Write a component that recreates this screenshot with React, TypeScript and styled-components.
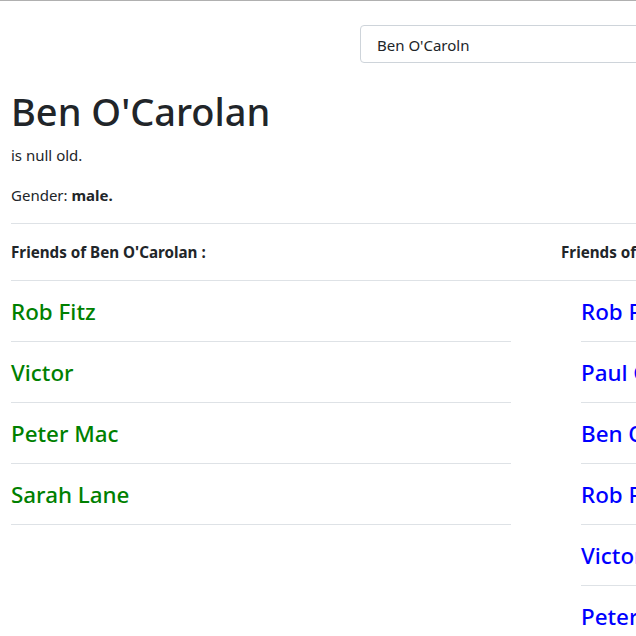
import React from "react";
import styled, { createGlobalStyle } from "styled-components";

const Global = createGlobalStyle`
  html, body { margin: 0; padding: 0; overflow: hidden; background: #fff; }
  body {
    font-family: "Noto Sans", "Open Sans", sans-serif;
    color: #212529;
    font-size: 16px;
    line-height: 1.5;
    border-top: 1px solid #b0b0b0;
  }
`;

const Page = styled.div`
  width: 1100px;
  padding-left: 11px;
`;

const SearchRow = styled.div`
  padding: 24px 0 0 349px;
`;

const SearchInput = styled.input`
  box-sizing: border-box;
  width: 500px;
  height: 38px;
  padding: 1px 16px 0;
  border: 1px solid #ced4da;
  border-radius: 4px;
  font-family: inherit;
  font-size: 15px;
  color: #212529;
  outline: none;
`;

const Title = styled.h1`
  margin: 24px 0 8px;
  font-size: 38px;
  font-weight: 500;
  line-height: 48px;
`;

const Para = styled.p`
  margin: 0 0 16px;
  font-size: 15px;
  line-height: 24px;
`;

const Rule = styled.hr`
  margin: 0;
  border: 0;
  border-top: 1px solid #dee2e6;
`;

const Columns = styled.div`
  display: grid;
  grid-template-columns: 500px 1fr;
  column-gap: 50px;
`;

const ColHeading = styled.div`
  padding: 16px 0;
  font-size: 15.2px;
  font-weight: 700;
  line-height: 24px;
  white-space: nowrap;
`;

const List = styled.ul<{ $indent?: number }>`
  list-style: none;
  margin: 0;
  padding: 0 0 0 ${(p) => p.$indent ?? 0}px;
`;

const Item = styled.li<{ $color: string }>`
  padding: 13px 0 11px;
  font-size: 22.4px;
  font-weight: 500;
  line-height: 36px;
  color: ${(p) => p.$color};
  border-bottom: 1px solid #dee2e6;
  white-space: nowrap;
`;

const left = ["Rob Fitz", "Victor", "Peter Mac", "Sarah Lane"];
const right = ["Rob Fitz", "Paul Costello", "Ben O'Carolan", "Rob Fitz", "Victor", "Peter Mac"];

export default function App() {
  return (
    <>
      <Global />
      <Page>
        <SearchRow>
          <SearchInput defaultValue="Ben O'Caroln" />
        </SearchRow>
        <Title>Ben O'Carolan</Title>
        <Para>is null old.</Para>
        <Para>
          Gender: <b>male.</b>
        </Para>
        <Rule />
        <Columns>
          <ColHeading>Friends of Ben O'Carolan :</ColHeading>
          <ColHeading>Friends of Rob Fitz :</ColHeading>
        </Columns>
        <Rule />
        <Columns>
          <List>
            {left.map((n, i) => (
              <Item key={i} $color="#008000">{n}</Item>
            ))}
          </List>
          <List $indent={20}>
            {right.map((n, i) => (
              <Item key={i} $color="#0000ff">{n}</Item>
            ))}
          </List>
        </Columns>
      </Page>
    </>
  );
}
